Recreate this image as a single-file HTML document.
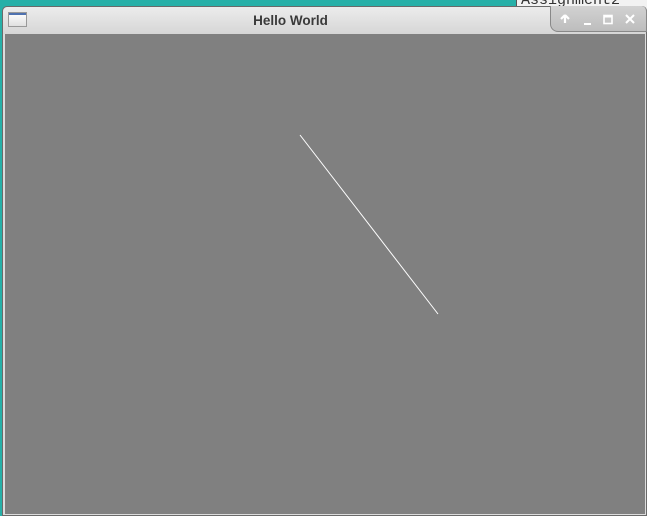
<!DOCTYPE html>
<html><head><style>
html,body{margin:0;padding:0;width:647px;height:516px;overflow:hidden;background:#27b0a8;position:relative;font-family:"Liberation Sans","DejaVu Sans",sans-serif}
.asg{position:absolute;left:516px;top:-8px;width:140px;height:20px;background:#f2f2f2;border-left:1px solid #555;font-family:"Liberation Mono",monospace;font-size:15px;color:#333;padding-left:4px;line-height:18px}
.win{position:absolute;left:2px;top:6px;width:645px;height:510px;background:#dcdcdc;border-radius:5px 5px 0 0;border:1px solid #6a6a6a;box-sizing:border-box}
.title{position:absolute;left:0;top:0;right:0;height:27px;background:linear-gradient(#ececec,#d6d6d6);border-radius:5px 5px 0 0}
.title span{position:absolute;left:0;right:68px;top:6px;text-align:center;font-size:13.5px;font-weight:bold;color:#3a3a3a}
.icon{position:absolute;left:5px;top:5px;width:19px;height:15px;border:1px solid #999;background:linear-gradient(#fff,#e0e0e0);box-sizing:border-box}
.icon:before{content:"";position:absolute;left:0;right:0;top:0;height:2px;background:#4f72b0}
.btns{position:absolute;right:-1px;top:-1px;width:97px;height:26px;background:linear-gradient(#d2d2d2,#bdbdbd);border:1px solid #888;border-top:none;border-radius:0 5px 0 8px;box-sizing:border-box}
.content{position:absolute;left:2px;top:27px;width:640px;height:480px;background:#808080}
</style></head><body>
<div class="asg">Assignment2</div>
<div class="win">
 <div class="title"><div class="icon"></div><span>Hello World</span>
  <div class="btns">
   <svg width="97" height="26" style="position:absolute;left:0;top:1px">
    <path d="M14 8 L10 12 M14 8 L18 12 M14 8 L14 16" stroke="#fff" stroke-width="2.2" fill="none"/>
    <rect x="33" y="16" width="7" height="2" fill="#fff"/>
    <rect x="53" y="8.5" width="8" height="8" stroke="#fff" stroke-width="1.6" fill="none"/>
    <rect x="53" y="8.5" width="8" height="2" fill="#fff"/>
    <path d="M75 8 L83 16 M83 8 L75 16" stroke="#fff" stroke-width="2" fill="none"/>
   </svg>
  </div>
 </div>
 <div class="content">
  <svg width="640" height="480" style="position:absolute;left:0;top:0"><line x1="295" y1="101" x2="433" y2="280" stroke="#fff" stroke-width="1"/></svg>
 </div>
</div>
</body></html>
